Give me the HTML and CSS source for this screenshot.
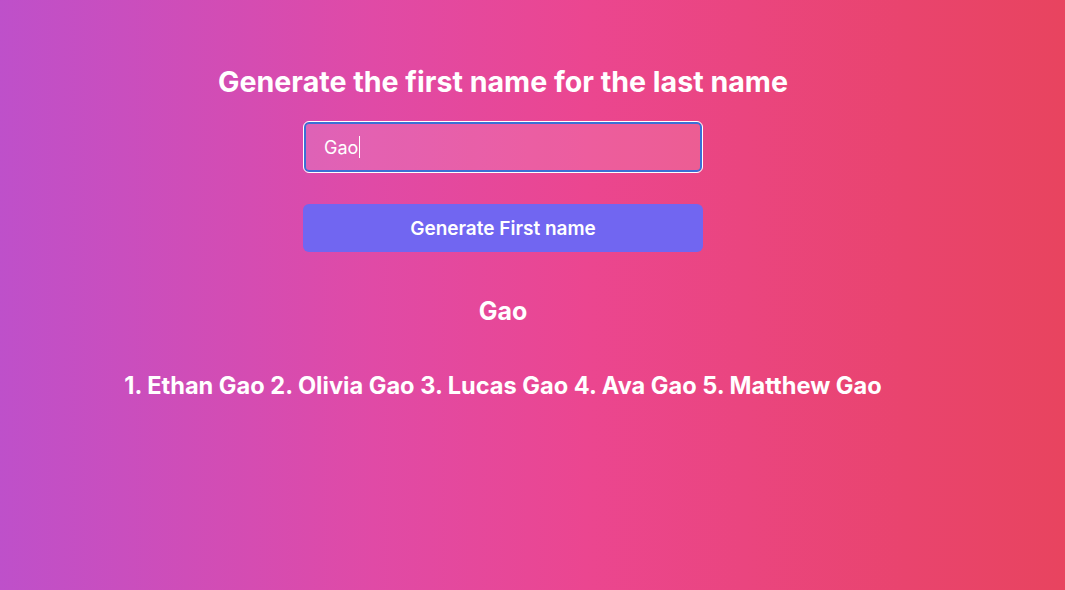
FILE: index.html
```html
<!DOCTYPE html>
<html lang="en">
<head>
<meta charset="utf-8">
<title>First name generator</title>
<link rel="stylesheet" href="styles.css">
</head>
<body>
<main class="page">
  <div class="container">
    <h1 class="title">Generate the first name for the last name</h1>
    <form class="form">
      <div class="input-box"><span class="input-text">Gao</span><span class="caret"></span></div>
      <button type="button" class="btn">Generate First name</button>
    </form>
    <h2 class="lastname">Gao</h2>
    <p class="results">1. Ethan Gao 2. Olivia Gao 3. Lucas Gao 4. Ava Gao 5. Matthew Gao</p>
  </div>
</main>
</body>
</html>
```
FILE: styles.css
```css
* { box-sizing: border-box; }
html, body { margin: 0; padding: 0; }
body {
  font-family: Inter, "Liberation Sans", sans-serif;
  color: #fff;
}
.page {
  min-height: 590px;
  background: linear-gradient(to right, #be50ca 0%, #e04aa6 35%, #eb4690 55%, #e9446e 85%, #e8445f 100%);
}
.container {
  width: 1006px;
  text-align: center;
  padding-top: 64px;
}
.title {
  margin: 0;
  font-size: 28.6px;
  font-weight: 700;
  line-height: 36px;
}
.form {
  display: flex;
  flex-direction: column;
  align-items: center;
  gap: 31px;
  margin-top: 21px;
}
.input-box {
  width: 400px;
  height: 52px;
  border: 1px solid #fff;
  border-radius: 6px;
  box-shadow: inset 0 0 0 2px #3b6fd6;
  background: rgba(255, 255, 255, 0.13);
  display: flex;
  align-items: center;
  padding-left: 20px;
  font-size: 18px;
  text-align: left;
}
.caret {
  display: inline-block;
  width: 1px;
  height: 22px;
  background: #fff;
  margin-left: 1px;
}
.btn {
  width: 400px;
  height: 48px;
  border: none;
  border-radius: 6px;
  background: #7166f1;
  color: #fff;
  font-family: inherit;
  font-size: 19px;
  font-weight: 600;
}
.lastname {
  margin: 44px 0 0;
  font-size: 25px;
  font-weight: 700;
  line-height: 30px;
}
.results {
  margin: 45px 0 0;
  font-size: 23.6px;
  font-weight: 700;
  line-height: 30px;
}
```
